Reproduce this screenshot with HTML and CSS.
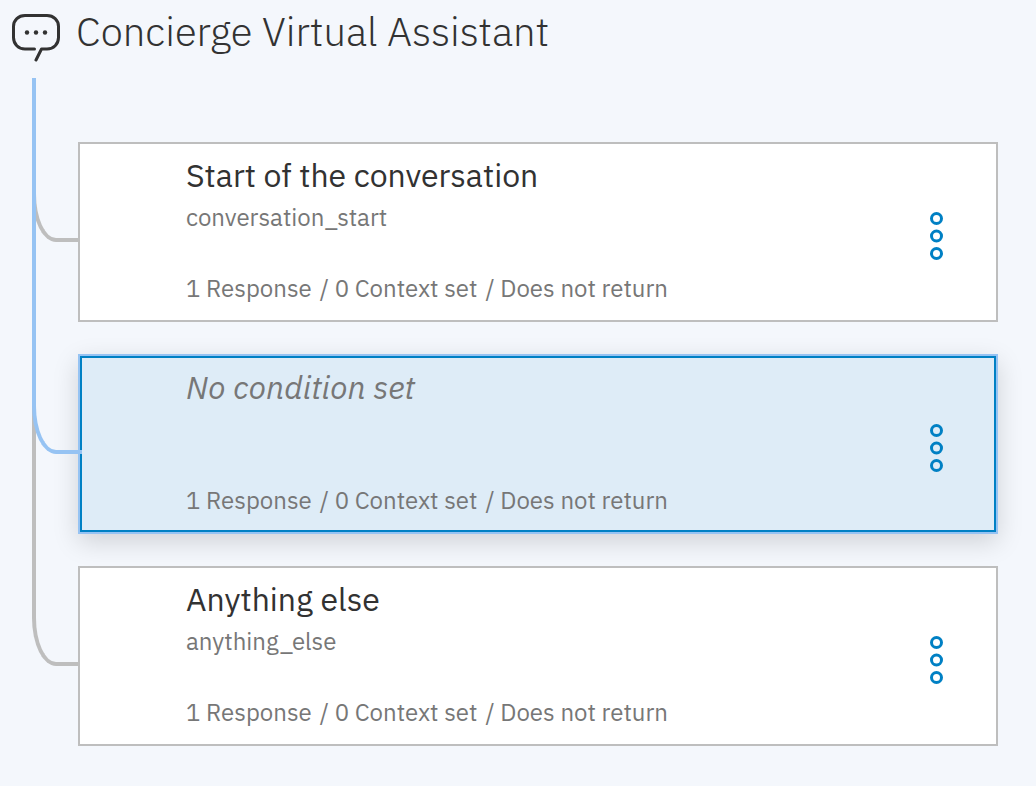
FILE: index.html
```html
<!DOCTYPE html>
<html lang="en">
<head>
<meta charset="utf-8">
<meta name="viewport" content="width=device-width, initial-scale=1">
<title>Concierge Virtual Assistant</title>
<link rel="stylesheet" href="styles.css">
</head>
<body>
<header class="header">
  <svg class="header-icon" viewBox="0 0 48 48" fill="none" stroke="#323232" stroke-width="3" stroke-linecap="round" stroke-linejoin="round" aria-hidden="true">
    <path d="M22.500 35H13C6.500 35 1.500 30 1.500 23.500V12.500C1.500 6 6.500 1.500 13 1.500H35C41.500 1.500 46.500 6 46.500 12.500V23.500C46.500 30 41.500 35 35 35H29.500L24 46"/>
    <g fill="#323232" stroke="none"><circle cx="15" cy="18.500" r="2.200"/><circle cx="24" cy="18.500" r="2.200"/><circle cx="33" cy="18.500" r="2.200"/></g>
  </svg>
  <h1 class="title">Concierge Virtual Assistant</h1>
</header>
<main>
  <ul class="tree">
    <li class="node node-first">
      <article class="card">
        <div class="card-body">
          <h2 class="name">Start of the conversation</h2>
          <p class="condition">conversation_start</p>
          <p class="meta"><span>1 Response</span><span>/ 0 Context set</span><span>/ Does not return</span></p>
        </div>
        <button class="menu" type="button" aria-label="Start of the conversation options"><svg class="dots" viewBox="0 0 14 50" aria-hidden="true"><circle cx="6.500" cy="7.500" r="5"/><circle cx="6.500" cy="25" r="5"/><circle cx="6.500" cy="42.500" r="5"/></svg></button>
      </article>
    </li>
    <li class="node node-selected">
      <article class="card">
        <div class="card-body">
          <h2 class="name">No condition set</h2>
          <p class="condition"></p>
          <p class="meta"><span>1 Response</span><span>/ 0 Context set</span><span>/ Does not return</span></p>
        </div>
        <button class="menu" type="button" aria-label="No condition set options"><svg class="dots" viewBox="0 0 14 50" aria-hidden="true"><circle cx="6.500" cy="7.500" r="5"/><circle cx="6.500" cy="25" r="5"/><circle cx="6.500" cy="42.500" r="5"/></svg></button>
      </article>
    </li>
    <li class="node">
      <article class="card">
        <div class="card-body">
          <h2 class="name">Anything else</h2>
          <p class="condition">anything_else</p>
          <p class="meta"><span>1 Response</span><span>/ 0 Context set</span><span>/ Does not return</span></p>
        </div>
        <button class="menu" type="button" aria-label="Anything else options"><svg class="dots" viewBox="0 0 14 50" aria-hidden="true"><circle cx="6.500" cy="7.500" r="5"/><circle cx="6.500" cy="25" r="5"/><circle cx="6.500" cy="42.500" r="5"/></svg></button>
      </article>
    </li>
  </ul>
</main>
</body>
</html>
```
FILE: styles.css
```css
* {
  box-sizing: border-box;
}

body {
  margin: 0;
  background: #f4f7fc;
  color: #323232;
  font-family: "IBM Plex Sans", Roboto, sans-serif;
}

h1, h2, p, ul {
  margin: 0;
  padding: 0;
}

.header {
  display: flex;
  align-items: flex-start;
  gap: 16px;
  padding: 8px 12px 0;
}

.header-icon {
  flex: none;
  width: 48px;
  height: 48px;
  margin-top: 6px;
}

.title {
  font-size: 40px;
  line-height: 46px;
  font-weight: 300;
}

.tree {
  display: flex;
  flex-direction: column;
  gap: 32px;
  padding: 80px 38px 40px 78px;
  list-style: none;
}

.node {
  position: relative;
}

/* Connector from the trunk to the card */
.node::before {
  content: "";
  position: absolute;
  left: -46px;
  top: -212px;
  width: 46px;
  height: 308px;
  border: solid #bebebe;
  border-width: 0 0 4px 4px;
  border-bottom-left-radius: 24px 48px;
}

.node-first::before {
  top: -64px;
  height: 160px;
}

.node-selected::before {
  top: -276px;
  height: 372px;
  border-color: #96c3f3;
  z-index: 1;
}

.card {
  position: relative;
  display: flex;
  align-items: flex-start;
  justify-content: space-between;
  min-height: 180px;
  padding: 9px 44px 9px 106px;
  background: #fff;
  border: 2px solid #bebebe;
}

.node-selected .card {
  background: #deecf7;
  border-color: #96c3f3;
  box-shadow: inset 0 0 0 2px #0080c4, 0 8px 24px rgba(0, 0, 0, 0.15);
}

.name {
  font-size: 32px;
  line-height: 44px;
  font-weight: 400;
}

.node-selected .name {
  color: #777;
  font-style: italic;
}

.condition,
.meta {
  min-height: 40px;
  color: #777;
  font-size: 24px;
  line-height: 40px;
}

.meta {
  display: flex;
  flex-wrap: wrap;
  gap: 0 8px;
  margin-top: 31px;
}

.menu {
  flex: none;
  display: flex;
  align-self: center;
  margin-top: 8px;
  padding: 0 8px;
  border: 0;
  background: none;
  cursor: pointer;
}

.dots {
  width: 14px;
  height: 50px;
  fill: none;
  stroke: #0080c4;
  stroke-width: 3;
}
```
